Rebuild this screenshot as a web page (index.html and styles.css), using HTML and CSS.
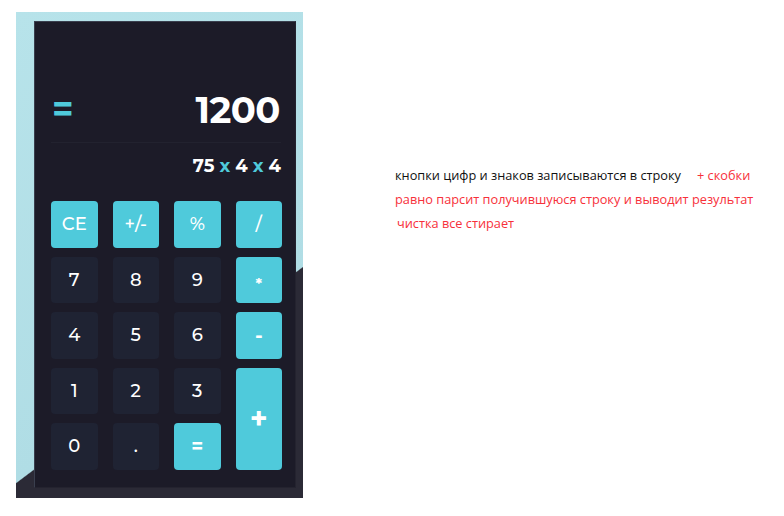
FILE: index.html
```html
<!DOCTYPE html>
<html lang="ru">
<head>
<meta charset="utf-8">
<link rel="stylesheet" href="styles.css">
</head>
<body>
<div class="page">
  <div class="frame">
    <div class="calc">
      <div class="result-row">
        <span class="eq">=</span>
        <span class="result">1200</span>
      </div>
      <div class="expr">75 <span class="op">x</span> 4 <span class="op">x</span> 4</div>
      <div class="keys">
        <button class="key accent">CE</button>
        <button class="key accent">+/-</button>
        <button class="key accent">%</button>
        <button class="key accent">/</button>
        <button class="key">7</button>
        <button class="key">8</button>
        <button class="key">9</button>
        <button class="key accent star">*</button>
        <button class="key">4</button>
        <button class="key">5</button>
        <button class="key">6</button>
        <button class="key accent bold">-</button>
        <button class="key">1</button>
        <button class="key">2</button>
        <button class="key">3</button>
        <button class="key accent plus">+</button>
        <button class="key">0</button>
        <button class="key">.</button>
        <button class="key accent bold">=</button>
      </div>
    </div>
  </div>
  <div class="notes">
    <p class="line"><span class="black">кнопки цифр и знаков записываются в строку</span><span class="red extra">+ скобки</span></p>
    <p class="line red">равно парсит получившуюся строку и выводит результат</p>
    <p class="line red indent">чистка все стирает</p>
  </div>
</div>
</body>
</html>
```
FILE: styles.css
```css
html, body {
  margin: 0;
  padding: 0;
  background: #ffffff;
}
.page {
  display: flex;
  align-items: flex-start;
  padding: 12px 0 0 16px;
}
.frame {
  width: 287px;
  height: 486px;
  padding: 9px 7px 10px 18px;
  box-sizing: border-box;
  background: linear-gradient(-37deg, #2b2a36 0, #2b2a36 32.8%, #b0dde5 33%, #b7e3ea 100%);
}
.calc {
  height: 467px;
  box-sizing: border-box;
  background: #1c1b28;
  border: 1px solid #3a3f4e;
  border-right-color: #24232f;
  border-bottom-color: #24232f;
  padding: 0 14px 0 16px;
  font-family: "Montserrat", "Inter", "Open Sans", sans-serif;
  color: #ffffff;
}
.result-row {
  display: flex;
  align-items: center;
  justify-content: space-between;
  height: 50px;
  margin-top: 62px;
  padding: 0 1px 8px 1px;
  border-bottom: 1px solid #22222f;
}
.eq {
  color: #4fcadb;
  font-size: 36px;
  font-weight: 700;
  line-height: 1;
}
.result {
  font-size: 37px;
  font-weight: 700;
  letter-spacing: -0.5px;
  line-height: 1;
}
.expr {
  text-align: right;
  font-size: 18px;
  font-weight: 700;
  line-height: 24px;
  margin-top: 11px;
}
.op {
  color: #4fcadb;
}
.keys {
  display: grid;
  grid-template-columns: repeat(4, 46.5px);
  grid-auto-rows: 46.5px;
  column-gap: 15px;
  row-gap: 9px;
  margin-top: 23px;
}
.key {
  border: none;
  border-radius: 4px;
  background: #1f2333;
  color: #ffffff;
  font-family: "Montserrat", "Inter", "Open Sans", sans-serif;
  font-size: 18px;
  font-weight: 500;
  padding: 0;
}
.key.accent {
  background: #4fcadb;
}
.key.bold {
  font-weight: 700;
  font-size: 20px;
}
.key.star {
  font-size: 15px;
  font-weight: 700;
  padding-top: 7px;
}
.key.plus {
  grid-row: span 2;
  font-size: 30px;
  font-weight: 700;
}
.notes {
  margin: 151px 0 0 92px;
  font-family: "Open Sans", "Liberation Sans", sans-serif;
  font-size: 12.75px;
}
.line {
  margin: 0;
  line-height: 24px;
  white-space: nowrap;
}
.black {
  color: #111111;
}
.red {
  color: #f7303a;
}
.extra {
  margin-left: 16px;
}
.indent {
  padding-left: 2px;
}
```
